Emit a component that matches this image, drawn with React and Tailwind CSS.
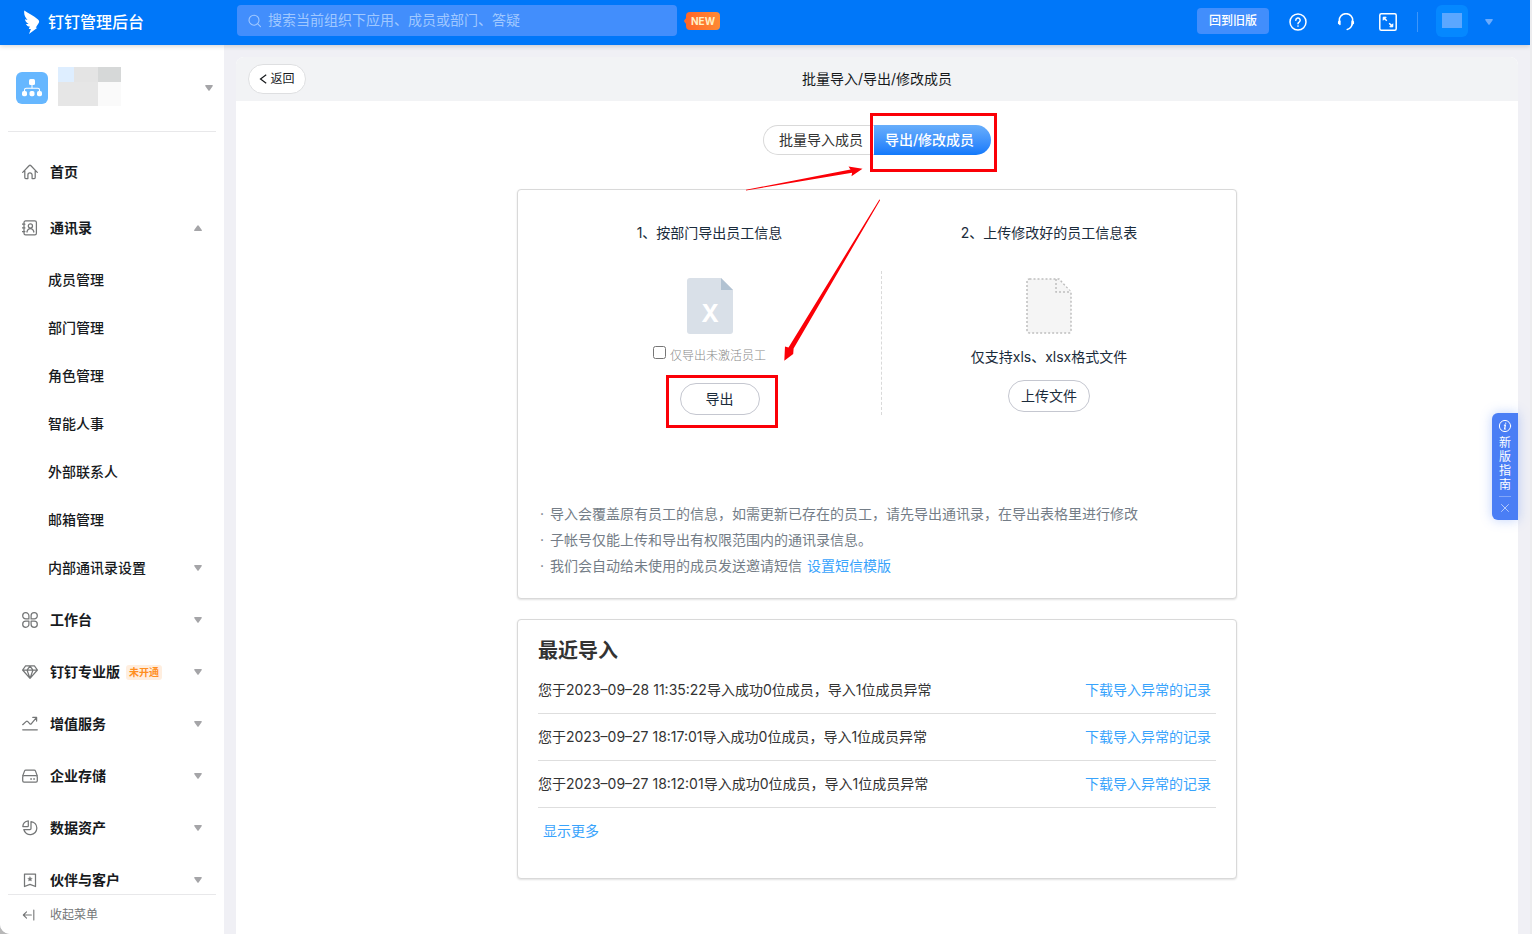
import { useState } from 'react';

const iconProps = {
  viewBox: '0 0 16 16',
  fill: 'none',
  stroke: 'currentColor',
  strokeWidth: 1.25,
  strokeLinecap: 'round',
  strokeLinejoin: 'round',
  className: 'w-4 h-4 shrink-0',
};

const icons = {
  home: (
    <svg {...iconProps}>
      <path d="M.7 8.4 7.3 1.5q.7-.7 1.4 0l6.6 6.9M2.8 7v6.6q0 1 1 1h2.1V11a2.1 2.1 0 0 1 4.2 0v3.6h2.1q1 0 1-1V7" />
    </svg>
  ),
  contacts: (
    <svg {...iconProps}>
      <rect x="2" y=".9" width="12.4" height="14" rx="1.6" />
      <circle cx="8.4" cy="6" r="2.1" />
      <path d="M4.900 12c.5-2.300 1.600-3.500 3.500-3.500s3 1.200 3.500 3.500M.3 4.200h2.600M.3 7.900h2.600M.3 11.600h2.600" />
    </svg>
  ),
  workbench: (
    <svg {...iconProps}>
      <path d="M6.900 6.900H3.800A3.100 3.100 0 1 1 6.900 3.800zM9.100 6.900V3.800a3.100 3.100 0 1 1 3.100 3.100zM6.900 9.100v3.100A3.100 3.100 0 1 1 3.800 9.100zM9.100 9.100h3.100a3.100 3.100 0 1 1-3.100 3.100z" />
    </svg>
  ),
  diamond: (
    <svg {...iconProps}>
      <path d="M3.600 1.800h8.800l3 4.200L8 14.400.6 6zM.6 6h14.800M5 6l3 8.400L11 6M5 6l3-4 3 4" />
    </svg>
  ),
  trend: (
    <svg {...iconProps}>
      <path d="M.7 8.700 4.300 5.400q.7-.5 1.300 0l2.300 2.500q.7.500 1.300 0l5.200-6.300M10.800 1.400h3.800v3.700M.7 13.800h14.600" />
    </svg>
  ),
  storage: (
    <svg {...iconProps}>
      <path d="M.8 7.600 2.600 2.900q.3-.8 1.200-.8h8.400q.900 0 1.200.800l1.800 4.700" />
      <rect x=".7" y="7.600" width="14.600" height="6.500" rx="1.300" />
      <path d="M8.800 11h.6M11.800 11h.6" strokeWidth="1.500" />
    </svg>
  ),
  pie: (
    <svg {...iconProps}>
      <path d="M9 1.500a6.600 6.600 0 1 1-7.200 8H8q1 0 1-1z" />
      <path d="M6.300.9v5q0 .7-.7.700H.8A6.200 6.200 0 0 1 6.300.9z" />
    </svg>
  ),
  bookmark: (
    <svg {...iconProps}>
      <path d="M2.500 2h11v12.500L8 12.300l-5.500 2.200z" />
      <path d="m8 4.800.7 1.400 1.500.2-1.100 1.100.3 1.500L8 8.300 6.600 9l.3-1.500-1.100-1.100 1.500-.2z" fill="currentColor" strokeWidth=".4" />
    </svg>
  ),
  collapse: (
    <svg {...iconProps}>
      <path d="M13.500 2.200v11.600M10.700 8H1.500M5.200 4.400 1.500 8l3.700 3.600" />
    </svg>
  ),
};

const contactItems = [
  { label: '成员管理' },
  { label: '部门管理' },
  { label: '角色管理' },
  { label: '智能人事' },
  { label: '外部联系人' },
  { label: '邮箱管理' },
  { label: '内部通讯录设置', expandable: true },
];

const menuItems = [
  { label: '工作台', icon: icons.workbench },
  { label: '钉钉专业版', icon: icons.diamond, tag: '未开通' },
  { label: '增值服务', icon: icons.trend },
  { label: '企业存储', icon: icons.storage },
  { label: '数据资产', icon: icons.pie },
  { label: '伙伴与客户', icon: icons.bookmark },
];

const notes = [
  { text: '导入会覆盖原有员工的信息，如需更新已存在的员工，请先导出通讯录，在导出表格里进行修改' },
  { text: '子帐号仅能上传和导出有权限范围内的通讯录信息。' },
  { text: '我们会自动给未使用的成员发送邀请短信', link: '设置短信模版' },
];

const records = [
  '您于2023–09–28 11:35:22导入成功0位成员，导入1位成员异常',
  '您于2023–09–27 18:17:01导入成功0位成员，导入1位成员异常',
  '您于2023–09–27 18:12:01导入成功0位成员，导入1位成员异常',
];

function Caret({ up, className = 'text-[#a5a5a8]' }) {
  return (
    <svg viewBox="0 0 8 6" fill="currentColor" className={`w-2 h-1.5 shrink-0 ${className}`}>
      {up ? (
        <path d="M1 6Q-.4 5.800.4 4.700L3.200.7q.8-1 1.600 0l2.800 4Q8.400 5.800 7 6z" />
      ) : (
        <path d="M1 0Q-.4.2.4 1.300l2.800 4q.8 1 1.600 0l2.800-4Q8.400.2 7 0z" />
      )}
    </svg>
  );
}

function Header() {
  return (
    <header className="relative z-10 flex items-center h-[45px] pb-0.5 shrink-0 bg-[#0077f9] text-white shadow-[0_1px_5px_rgba(0,0,0,0.18)]">
      <div className="flex items-center w-[237px] shrink-0 pl-6">
        <svg viewBox="0 0 16 24" fill="currentColor" className="w-4 h-6">
          <path d="M.3.600C4 3.300 9.500 5.600 14 9.400c1.300 1.100 1.400 2.200.7 3.600l-3 4.800h1.700L5 24l1.900-4.900H4.800l1-2.500c-1.700-.2-3.100-1.100-3.900-2.700l2.700.1C2.700 12.900 1.300 11.200.9 9.200l2.600.9C1.200 7.500-.400 4.300.3.600z" />
        </svg>
        <span className="pl-2 text-base leading-6 font-medium">钉钉管理后台</span>
      </div>
      <label className="flex items-center w-[440px] h-[31px] mb-0.5 px-[11px] gap-1.5 rounded bg-[#428efc] text-[#a0c8ff]">
        <svg viewBox="0 0 14 14" fill="none" stroke="currentColor" strokeWidth="1.100" strokeLinecap="round" className="w-3.5 h-3.5 shrink-0">
          <circle cx="6" cy="6.200" r="5" />
          <path d="m9.800 9.900 2.700 2.700" />
        </svg>
        <input
          type="text"
          aria-label="搜索"
          placeholder="搜索当前组织下应用、成员或部门、答疑"
          className="flex-1 min-w-0 pb-0.5 bg-transparent text-sm outline-none placeholder:text-[#a0c8ff]"
        />
      </label>
      <div className="flex items-center ml-[7px] mb-0.5">
        <svg viewBox="0 0 3 8" fill="#ff6a2b" className="w-[3px] h-2 -mr-px">
          <path d="M3 0v8L.5 5q-.8-1 0-2z" />
        </svg>
        <span className="px-[5px] rounded bg-gradient-to-r from-[#ff6528] to-[#ff8a34] text-[#fff0c4] text-[10px] leading-[18px] font-bold">
          NEW
        </span>
      </div>
      <div className="flex items-center ml-auto pr-[37px]">
        <button className="h-[26px] w-[72px] mb-0.5 rounded bg-[#428efc] text-xs font-medium">回到旧版</button>
        <button aria-label="帮助" className="ml-5">
          <svg viewBox="0 0 18 18" fill="none" stroke="currentColor" strokeWidth="1.500" strokeLinecap="round" className="w-[18px] h-[18px]">
            <circle cx="9" cy="9" r="8" />
            <path d="M6.800 7.200a2.200 2.200 0 1 1 3.300 1.900q-1.100.6-1.100 1.600" />
            <path d="M9 13v.1" strokeWidth="1.600" />
          </svg>
        </button>
        <button aria-label="客服" className="ml-[30px]">
          <svg viewBox="0 0 18 18" fill="none" stroke="currentColor" strokeWidth="1.500" strokeLinecap="round" className="w-[18px] h-[18px]">
            <path d="M2.400 8.500a6.700 6.700 0 1 1 13.200 0c0 4.200-2.300 7.600-5.400 8" />
            <path d="M1.700 8.800v1.700M2.900 8v3.400M15.100 8v3.400M16.300 8.800v1.700" />
          </svg>
        </button>
        <button aria-label="全屏" className="ml-6">
          <svg viewBox="0 0 18 18" fill="none" stroke="currentColor" strokeWidth="1.500" strokeLinejoin="round" className="w-[18px] h-[18px]">
            <rect x=".8" y=".8" width="16.400" height="16.400" rx="1.500" />
            <path d="m4.500 4.500 3.300 3.300m2.400 2.400 3.300 3.300" />
            <path d="M4.200 7.200v-3h3zM13.800 10.800v3h-3z" fill="currentColor" strokeWidth="1" />
          </svg>
        </button>
        <span className="ml-5 w-px h-5 bg-[#3d96fb]"></span>
        <button aria-label="账号" className="flex items-center ml-[18px] gap-[17px]">
          <span className="flex items-center justify-center w-8 h-8 mb-0.5 rounded-md bg-[#0588ff]">
            <span className="w-5 h-[15px] bg-[#5ba7ff]"></span>
          </span>
          <Caret className="text-[#6cabfc]" />
        </button>
      </div>
    </header>
  );
}

function MenuItem({ label, icon, tag, expandable = true, open = false, className = '' }) {
  return (
    <button className={`flex items-center w-full h-[52px] px-[22px] text-sm font-bold text-[#171a1d] ${className}`}>
      <span className="mr-3 text-[#747677]">{icon}</span>
      {label}
      {tag && (
        <span className="ml-1.5 px-[3px] rounded-[3px] bg-[#ffeedf] text-[#ff8f1f] text-[10px] leading-[15px] font-bold">{tag}</span>
      )}
      {expandable && <Caret up={open} className="ml-auto text-[#a5a5a8]" />}
    </button>
  );
}

function Sidebar() {
  return (
    <aside className="flex flex-col w-56 shrink-0 bg-white">
      <div className="flex items-start h-[87px] mx-2 pl-2 border-b border-[#e8e8ea] shrink-0">
        <div className="flex items-center justify-center w-8 h-8 mt-[27px] rounded-md bg-[#66b7ff]">
          <svg viewBox="0 0 20 18" fill="#fff" className="w-5 h-[18px]">
            <rect x="7" y="0" width="6" height="6" rx="1.500" />
            <path d="M9.500 6h1v3.200h-1z" />
            <path d="M2.500 12.500V11q0-1.700 1.700-1.700h11.600q1.700 0 1.700 1.700v1.500" fill="none" stroke="#fff" strokeWidth="1.100" />
            <rect x="0" y="12" width="5" height="5.200" rx="1.800" />
            <rect x="7.500" y="12" width="5" height="5.200" rx="1.800" />
            <rect x="15" y="12" width="5" height="5.200" rx="1.800" />
          </svg>
        </div>
        <div className="grid grid-cols-[16px_24px_23px] grid-rows-[15px_24px] ml-2.5 mt-[22px]">
          <span className="bg-[#deeeff]"></span>
          <span className="bg-[#e4e4e4]"></span>
          <span className="bg-[#d6d8d8]"></span>
          <span className="col-span-2 bg-[#e6e6e6]"></span>
          <span className="bg-[#fafafa]"></span>
        </div>
        <button aria-label="切换组织" className="self-center ml-auto mr-[3px]">
          <Caret />
        </button>
      </div>

      <nav className="flex-1 min-h-0 overflow-hidden pt-3.5">
        <MenuItem label="首页" icon={icons.home} expandable={false} className="mb-1" />
        <MenuItem label="通讯录" icon={icons.contacts} open />
        <ul className="py-0.5">
          {contactItems.map((item) => (
            <li key={item.label}>
              <a href="#" className="flex items-center h-12 pl-12 pr-[22px] text-sm text-[#171a1d] font-medium">
                {item.label}
                {item.expandable && <Caret className="ml-auto text-[#a5a5a8]" />}
              </a>
            </li>
          ))}
        </ul>
        {menuItems.map((item) => (
          <MenuItem key={item.label} {...item} />
        ))}
      </nav>

      <button className="flex items-center h-10 mx-2 pl-3.5 shrink-0 border-t border-[#e8e8ea] text-xs text-[#747677]">
        <span className="mr-3 [&>svg]:w-3.5 [&>svg]:h-3.5 [&>svg]:mr-0.5">{icons.collapse}</span>
        收起菜单
      </button>
    </aside>
  );
}

function ImportCard() {
  const [onlyInactive, setOnlyInactive] = useState(false);

  return (
    <section className="relative w-full px-5 pt-8 pb-[19px] bg-white border border-[#d9d9d9] rounded shadow-[0_1px_2px_rgba(0,0,0,0.12)] text-sm text-[#1a2b3b]">
      <div className="flex h-[262px]">
        <div className="flex flex-col items-center flex-1">
          <h2 className="leading-[22px]">1、按部门导出员工信息</h2>
          <svg viewBox="0 0 46 56" className="w-[46px] h-14 mt-[34px]">
            <path d="M3 0h31l12 12v41q0 3-3 3H3q-3 0-3-3V3q0-3 3-3z" fill="#d9e0e8" />
            <path d="M34 0v12h12z" fill="#b1c2d2" />
            <text x="23" y="44" textAnchor="middle" fontSize="24" fontWeight="700" fill="#fff">X</text>
          </svg>
          <label className="flex items-center gap-1 mt-3 text-xs leading-5 text-[#888] font-light">
            <input
              type="checkbox"
              checked={onlyInactive}
              onChange={(e) => setOnlyInactive(e.target.checked)}
              className="w-[13px] h-[13px] mb-[7px]"
            />
            仅导出未激活员工
          </label>
          <div className="relative ml-5 mt-[17px]">
            <button className="block w-20 h-8 rounded-full border border-[#c5c7d0] bg-white">导出</button>
            <span className="absolute -left-3.5 -right-[18px] -top-2 -bottom-[13px] border-3 border-[#fb0007] pointer-events-none"></span>
          </div>
        </div>
        <div className="h-36 mt-[49px] border-l border-dashed border-[#d9d9d9]"></div>
        <div className="flex flex-col items-center w-[334px]">
          <h2 className="leading-[22px]">2、上传修改好的员工信息表</h2>
          <svg viewBox="0 0 46 56" className="w-[46px] h-14 mt-[34px]" fill="#f5f5f5" stroke="#bfbfbf" strokeWidth="1.500" strokeDasharray="2 2">
            <path d="M3.500 1H33l12 13v38.500q0 2.500-2.500 2.500h-39Q1 55 1 52.500v-49Q1 1 3.500 1z" />
            <path d="M30 1v13h15" />
          </svg>
          <p className="mt-3 leading-[22px]">仅支持xls、xlsx格式文件</p>
          <button className="h-8 mt-3 px-3 rounded-full border border-[#c5c7d0] bg-white">上传文件</button>
        </div>
      </div>

      <ul className="mt-[17px] leading-[26px] text-[#747d87]">
        {notes.map((note) => (
          <li key={note.text} className="flex">
            <span className="w-2 mr-1 shrink-0 text-center">·</span>
            {note.text}
            {note.link && <a href="#" className="ml-[5px] text-[#38a3fc]">{note.link}</a>}
          </li>
        ))}
      </ul>

      {/* guide arrows, they run over the card edge */}
      <svg viewBox="0 0 180 210" fill="#fb0007" className="absolute left-[218px] -top-8 w-[180px] h-[210px] pointer-events-none">
        <path d="M10 31.800 114.500 11.600l-2-3.200 14 2.400-11 7.400.6-3.400L10 32.400z" />
        <path d="M144.200 42 57.600 190.500l-.4 5.500-8.900 6.700.7-14.200 3.500.9L143.400 41.600z" />
      </svg>
    </section>
  );
}

function RecentImports() {
  return (
    <section className="w-full mt-5 px-5 pt-4 pb-[30px] bg-white border border-[#d9d9d9] rounded shadow-[0_1px_2px_rgba(0,0,0,0.12)] text-sm text-[#333]">
      <h2 className="text-xl leading-[31px] font-bold">最近导入</h2>
      <ul>
        {records.map((text) => (
          <li key={text} className="flex items-center justify-between h-[47px] pr-[5px] border-b border-[#dedede]">
            <span>{text}</span>
            <a href="#" className="text-[#38a3fc]">下载导入异常的记录</a>
          </li>
        ))}
      </ul>
      <button className="block h-[34px] mt-1.5 px-[5px] text-[#38a3fc]">显示更多</button>
    </section>
  );
}

export default function App() {
  return (
    <div className="h-screen bg-[#b8b8b8] font-[Inter,'Noto_Sans_CJK_SC',sans-serif]">
      <div className="relative flex flex-col h-full overflow-hidden rounded-bl-[10px] border-r-2 border-[#ececee] bg-[#f0f0f5]">
        <Header />
        <div className="flex flex-1 min-h-0">
          <Sidebar />
          <main className="flex flex-col flex-1 min-w-0 mx-3 mt-3 rounded-t-lg overflow-hidden bg-white">
            <div className="grid grid-cols-[1fr_auto_1fr] items-center h-11 px-3 shrink-0 bg-[#f2f3f5]">
              <button className="flex items-center justify-center gap-[3px] w-[58px] h-[30px] rounded-full border border-[#dedfe1] bg-white text-xs text-[#171a1d]">
                <svg viewBox="0 0 8 10" fill="none" stroke="currentColor" strokeWidth="1.200" className="w-2 h-2.5">
                  <path d="M7.200.8 1.500 5l5.700 4.200" />
                </svg>
                返回
              </button>
              <h1 className="text-sm text-[#171a1d]">批量导入/导出/修改成员</h1>
            </div>
            <div className="flex-1 min-h-0 overflow-hidden">
              <div className="flex flex-col items-center w-[720px] max-w-full mx-auto pt-6">
                <div className="flex h-[30px] mb-[34px] text-sm">
                  <button className="w-[111px] pl-1 rounded-l-full border border-r-0 border-[#d9d9d9] text-[#333]">批量导入成员</button>
                  <div className="relative">
                    <button className="w-[117px] h-full pr-1.5 rounded-r-full bg-gradient-to-b from-[#68aefb] to-[#1079fb] text-white font-medium whitespace-nowrap">
                      导出/修改成员
                    </button>
                    <span className="absolute -left-1 -right-1.5 -top-3 -bottom-[17px] border-3 border-[#fb0007] pointer-events-none"></span>
                  </div>
                </div>
                <ImportCard />
                <RecentImports />
              </div>
            </div>
          </main>
        </div>

        <div className="absolute right-3 top-[413px] z-20 flex flex-col items-center w-[26px] h-[107px] pt-1.5 rounded-l-md bg-[#4a7ef5] text-white shadow-[0_0_12px_rgba(74,126,245,0.35)]">
          <svg viewBox="0 0 14 14" fill="none" stroke="currentColor" strokeLinecap="round" className="w-3.5 h-3.5 shrink-0">
            <circle cx="7" cy="7" r="5.600" />
            <path d="M6.400 6.200h1L6.600 10h.8M7.700 4v.2" strokeWidth="1.200" />
          </svg>
          <a href="#" className="w-3 mt-[3px] text-xs leading-[14px] text-center">新版指南</a>
          <span className="w-3 h-px mt-1 shrink-0 bg-[#82a6f8]"></span>
          <button aria-label="关闭" className="mt-1.5">
            <svg viewBox="0 0 10 10" fill="none" stroke="#b5cafb" strokeLinecap="round" className="w-2.5 h-2.5">
              <path d="m1.500 1.500 7 7M8.500 1.500l-7 7" />
            </svg>
          </button>
        </div>
      </div>
    </div>
  );
}
